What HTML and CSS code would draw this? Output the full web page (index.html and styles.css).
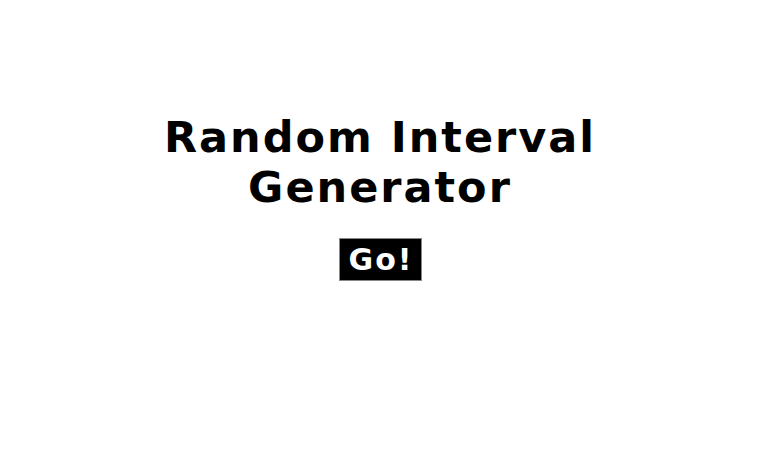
FILE: index.html
```html
<!DOCTYPE html>
<html>
<head>
<meta charset="utf-8">
<link rel="stylesheet" href="styles.css">
</head>
<body>
<main class="page">
  <h1 class="title">Random Interval<br>Generator</h1>
  <button class="go">Go!</button>
</main>
</body>
</html>
```
FILE: styles.css
```css
html, body { margin: 0; padding: 0; background: #fff; }
.page {
  display: flex;
  flex-direction: column;
  align-items: center;
  padding-top: 112px;
  font-family: "DejaVu Sans", sans-serif;
}
.title {
  margin: 0;
  font-size: 43px;
  line-height: 50px;
  font-weight: bold;
  text-align: center;
  color: #000;
  letter-spacing: 2px;
}
.go {
  margin-top: 26px;
  width: 83px;
  height: 43px;
  background: #000;
  color: #fff;
  border: 1px solid #888;
  font-family: "DejaVu Sans", sans-serif;
  font-weight: bold;
  font-size: 30px;
  letter-spacing: 2px;
  padding: 0 0 0 2px;
}
```
